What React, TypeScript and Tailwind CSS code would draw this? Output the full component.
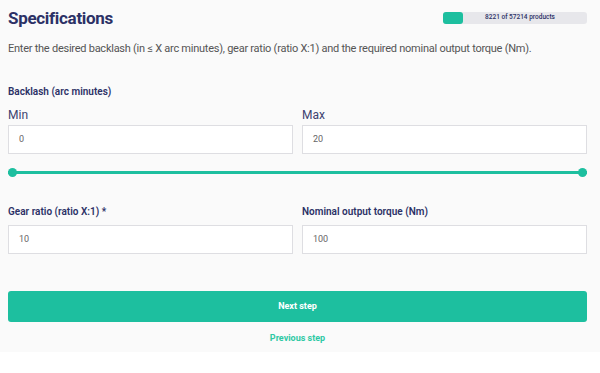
const teal = 'bg-[#1dbf9f]';

const Field = ({ label, value, bold }: { label: string; value: string; bold?: boolean }) => (
  <div className="flex flex-col">
    <label
      className={
        bold
          ? 'text-[10px] font-semibold text-[#2c3166] leading-[14px] h-[14px]'
          : 'text-[12px] text-[#3d4270] leading-[16px] h-[16px]'
      }
    >
      {label}
    </label>
    <div className={`bg-white border border-[#dedee2] h-[29px] flex items-center px-[10px] ${bold ? 'mt-[6px]' : 'mt-[2px]'}`}>
      <span className="text-[9px] text-[#666]">{value}</span>
    </div>
  </div>
);

export default function App() {
  return (
    <div className="w-[600px] h-[373px] bg-white" style={{ fontFamily: 'Roboto, "Noto Sans", sans-serif' }}>
      <div className="bg-[#fafafa] pl-2 pr-[13px] pt-[7px] h-[352px]">
        <div className="flex items-center justify-between h-[22px]">
          <h1 className="text-[17px] font-bold text-[#2c3166] leading-[22px] tracking-[-0.3px]">Specifications</h1>
          <div className="relative w-[144px] h-[12px] rounded-[3px] bg-[#e7e7eb] flex items-center justify-center">
            <div className={`absolute left-0 top-0 h-full w-[20px] rounded-[3px] ${teal}`} />
            <span className="text-[6.5px] font-medium text-[#2c3166] pl-[10px]">8221 of 57214 products</span>
          </div>
        </div>
        <p className="mt-[12px] text-[11px] text-[#555] leading-[16px] tracking-[-0.25px] whitespace-nowrap">
          Enter the desired backlash (in ≤ X arc minutes), gear ratio (ratio X:1) and the required nominal output torque (Nm).
        </p>

        <h2 className="mt-[28px] text-[10px] font-semibold text-[#2c3166] leading-[14px]">Backlash (arc minutes)</h2>
        <div className="grid grid-cols-2 gap-[9px] mt-[8px]">
          <Field label="Min" value="0" />
          <Field label="Max" value="20" />
        </div>

        <div className="relative h-[9px] mt-[14px] flex items-center">
          <div className={`w-full h-[3px] ${teal}`} />
          <div className={`absolute left-0 top-0 w-[9px] h-[9px] rounded-full ${teal}`} />
          <div className={`absolute right-0 top-0 w-[9px] h-[9px] rounded-full ${teal}`} />
        </div>

        <div className="grid grid-cols-2 gap-[9px] mt-[28px]">
          <Field label="Gear ratio (ratio X:1) *" value="10" bold />
          <Field label="Nominal output torque (Nm)" value="100" bold />
        </div>

        <button className={`mt-[37px] w-full h-[31px] rounded-[3px] ${teal} text-white text-[9px] font-bold`}>
          Next step
        </button>
        <div className="text-center mt-[10px] text-[9px] font-bold text-[#2ec9a4] leading-[12px]">Previous step</div>
      </div>
    </div>
  );
}
